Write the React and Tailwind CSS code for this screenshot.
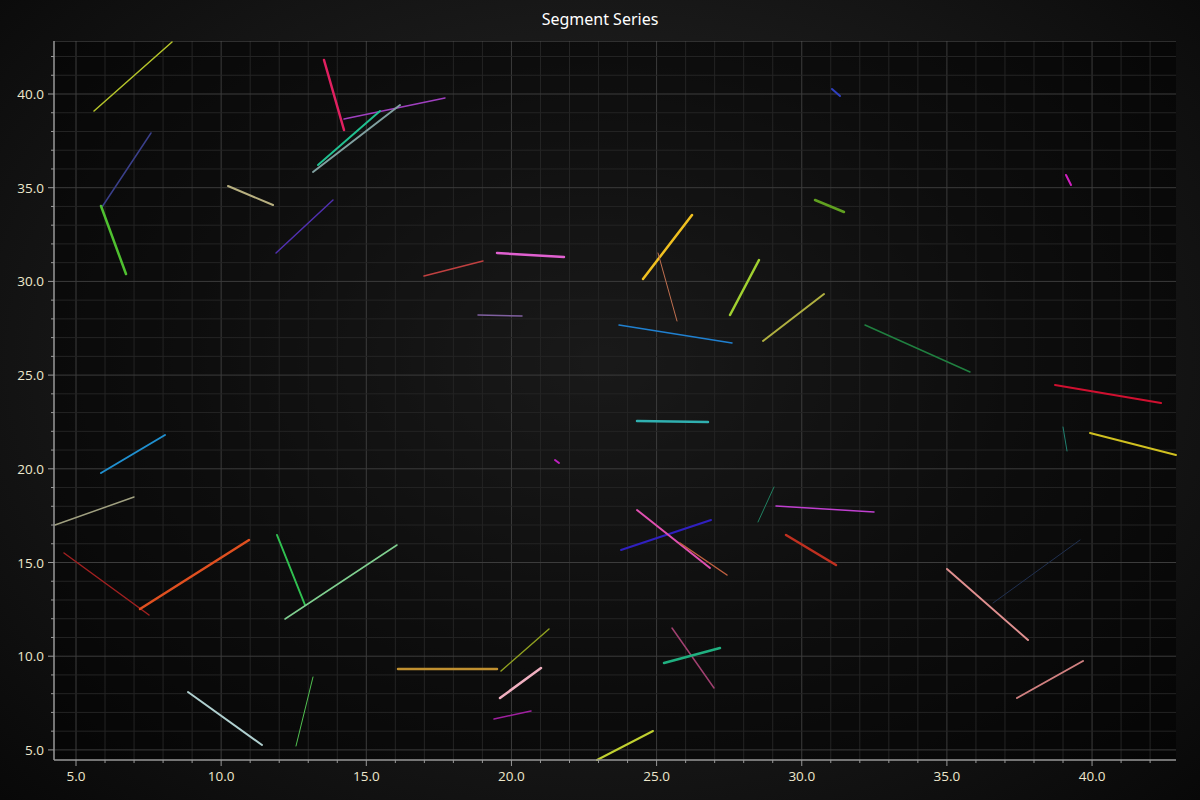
import React from 'react';

const segs = [
  [94,111,172,42,'#b5c42a',1.5],[102,207,151,133,'#3a3f8a',1.5],[101,206,126,274,'#4fc030',2.5],
  [228,186,273,205,'#b8b080',2],[324,60,344,130,'#e02060',2.5],[344,119,445,98,'#a040c0',1.5],
  [318,165,380,111,'#20c090',2],[313,172,400,105,'#80a0a0',2],[276,253,333,200,'#5030b0',1.5],
  [424,276,483,261,'#c04040',1.5],[497,253,564,257,'#e060d0',2.5],[478,315,522,316,'#8060a0',1.5],
  [643,279,692,215,'#f0c020',2.5],[658,253,677,321,'#c07050',1],[730,315,759,260,'#a0d030',2.5],
  [763,341,824,294,'#b0b040',2],[815,200,844,212,'#60a020',2.5],[832,89,840,96,'#3040c0',2],
  [1066,175,1071,185,'#d020c0',2],[619,325,732,343,'#2080d0',1.5],[865,325,970,372,'#208040',1.5],
  [1055,385,1161,403,'#d01030',2],[637,421,708,422,'#30b0b0',2.5],[1063,427,1067,451,'#208070',1],
  [1090,433,1176,455,'#d0c020',2],[555,460,559,463,'#c020c0',2],[101,473,165,435,'#2090d0',2],
  [55,525,134,497,'#a0a080',1.5],[64,553,149,615,'#a02020',1.5],[140,609,249,540,'#e05020',2.5],
  [277,535,305,605,'#30c050',2],[285,619,397,545,'#80d090',1.5],[398,669,497,669,'#c09030',2.5],
  [501,671,549,629,'#90a020',1.5],[500,698,541,668,'#f0b0c0',2.5],[494,719,531,711,'#a020a0',1.5],
  [597,760,653,731,'#c0d030',2],[188,692,262,745,'#b0d0d0',2],[296,746,313,677,'#50c050',1],
  [621,550,711,520,'#3020c0',2],[637,510,710,568,'#e050b0',2],[680,543,727,575,'#c06040',1.5],
  [672,628,714,688,'#a04070',1.5],[664,663,720,648,'#20b080',2.5],[758,522,774,487,'#208060',1],
  [776,506,874,512,'#c040d0',1.5],[786,535,836,565,'#c03020',2.5],[947,569,1028,640,'#e09090',2],
  [993,603,1080,540,'#203050',1],[1017,698,1083,661,'#d08080',2],
];

const L = 54, R = 1176, T = 41, B = 760;
const xp = (v) => 76 + (v - 5) * 29.03;
const yp = (v) => 94 + (40 - v) * 18.74;

const xs = [];
for (let v = 5; v <= 42; v++) xs.push(v);
const ys = [];
for (let v = 5; v <= 42; v++) ys.push(v);

const font = "'Open Sans', 'Noto Sans', sans-serif";

export default function App() {
  return (
    <div className="w-[1200px] h-[800px] flex flex-col bg-radial-[at_50%_45%] from-[#333333] via-[#1a1a1a] to-[#080808] font-['Open_Sans',sans-serif]">
      <div className="h-[41px] flex items-center justify-center text-[16px] text-white pb-1">Segment Series</div>
      <svg width="1200" height="759" viewBox="0 41 1200 759" className="block">
        <rect x={L} y={T} width={R - L} height={B - T} fill="#000" fillOpacity="0.5" />
        {xs.map((v) => (
          <line key={'x' + v} x1={xp(v)} x2={xp(v)} y1={T} y2={B}
            stroke={v % 5 === 0 ? '#3c3c3c' : '#242424'} strokeWidth="1" />
        ))}
        {ys.map((v) => (
          <line key={'y' + v} y1={yp(v)} y2={yp(v)} x1={L} x2={R}
            stroke={v % 5 === 0 ? '#3c3c3c' : '#242424'} strokeWidth="1" />
        ))}
        <line x1={L} x2={R} y1={T} y2={T} stroke="#555" />
        {segs.map((s, i) => (
          <line key={i} x1={s[0]} y1={s[1]} x2={s[2]} y2={s[3]} stroke={s[4]} strokeWidth={s[5]} strokeLinecap="round" />
        ))}
        <line x1={L} x2={L} y1={T} y2={B} stroke="#999" strokeWidth="1.5" />
        <line x1={L} x2={R} y1={B} y2={B} stroke="#999" strokeWidth="1.5" />
        {ys.map((v) => (
          <line key={'yt' + v} y1={yp(v)} y2={yp(v)} x1={v % 5 === 0 ? L - 6 : L - 3} x2={L} stroke="#999" />
        ))}
        {xs.map((v) => (
          <line key={'xt' + v} x1={xp(v)} x2={xp(v)} y1={B} y2={v % 5 === 0 ? B + 6 : B + 3} stroke="#999" />
        ))}
        {[5, 10, 15, 20, 25, 30, 35, 40].map((v) => (
          <text key={'yl' + v} x={L - 10} y={yp(v) + 5} textAnchor="end" fill="#eee8cc" fontSize="13.5" fontFamily={font}>{v.toFixed(1)}</text>
        ))}
        {[5, 10, 15, 20, 25, 30, 35, 40].map((v) => (
          <text key={'xl' + v} x={xp(v)} y={B + 21} textAnchor="middle" fill="#eee8cc" fontSize="13.5" fontFamily={font}>{v.toFixed(1)}</text>
        ))}
      </svg>
    </div>
  );
}
